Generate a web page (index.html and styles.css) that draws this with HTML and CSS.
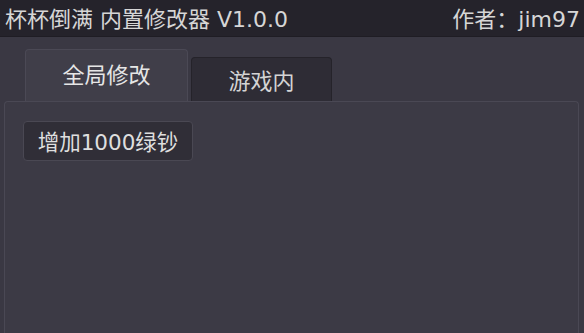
FILE: index.html
```html
<!DOCTYPE html>
<html lang="zh-CN">
<head>
  <meta charset="UTF-8">
  <meta name="viewport" content="width=device-width, initial-scale=1.0">
  <title>杯杯倒满 内置修改器</title>
  <link rel="stylesheet" href="styles.css">
</head>
<body>
  <div class="window">
    <header class="titlebar">
      <span class="title">杯杯倒满 内置修改器 V1.0.0</span>
      <span class="author">作者：jim97</span>
    </header>

    <div class="main">
      <div class="tabs">
        <div class="tab active">全局修改</div>
        <div class="tab">游戏内</div>
      </div>

      <section class="panel">
        <button class="action">增加1000绿钞</button>
      </section>
    </div>
  </div>
</body>
</html>
```

FILE: styles.css
```css
* {
  box-sizing: border-box;
  margin: 0;
  padding: 0;
  font-family: "DejaVu Sans", "Noto Sans CJK SC", sans-serif;
}

body {
  background: #3a3843;
  color: #dcdcdc;
  width: 584px;
  height: 333px;
  overflow: hidden;
}

.window {
  display: flex;
  flex-direction: column;
  height: 100%;
}

.titlebar {
  height: 37px;
  background: #25232b;
  display: flex;
  align-items: center;
  justify-content: space-between;
  padding: 0 4px 2px 5px;
  font-size: 22px;
  color: #d6d6d6;
  border-bottom: 1px solid #1f1d24;
}

.main {
  flex: 1;
  display: flex;
  flex-direction: column;
  padding: 12px 5px 0 4px;
}

.tabs {
  display: flex;
  align-items: flex-end;
  margin-left: 21px;
  height: 52px;
}

.tab {
  display: flex;
  align-items: center;
  justify-content: center;
  width: 141px;
  height: 44px;
  margin-left: 3px;
  font-size: 22px;
  color: #d4d4d4;
  background: #2e2c35;
  border: 1px solid #25232a;
  border-bottom: none;
  border-radius: 4px 4px 0 0;
  padding-bottom: 2px;
}

.tab.active {
  width: 163px;
  height: 52px;
  margin-left: 0;
  background: #403e49;
  border-color: #4b4955;
  color: #e6e6e6;
  padding-bottom: 6px;
}

.panel {
  flex: 1;
  background: #3c3a45;
  border: 1px solid #4a4854;
  border-bottom: none;
  border-radius: 4px 4px 0 0;
  padding: 19px 0 0 18px;
}

.action {
  display: flex;
  align-items: center;
  justify-content: center;
  width: 170px;
  height: 40px;
  background: #302e37;
  border: 1px solid #4a4853;
  border-radius: 4px;
  color: #dedede;
  font-size: 21.5px;
  font-family: "DejaVu Sans", "Noto Sans CJK SC", sans-serif;
  padding-bottom: 2px;
}
```
